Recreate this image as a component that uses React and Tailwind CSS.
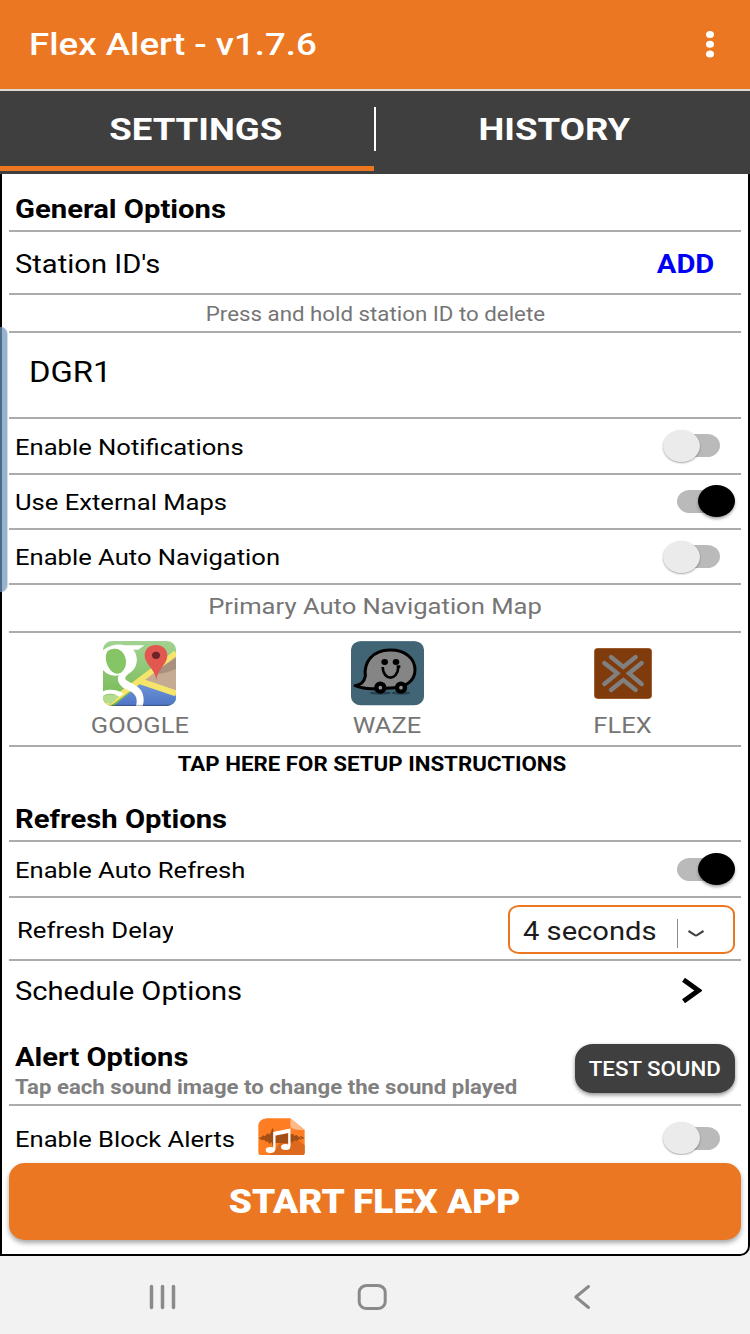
import { clsx } from 'clsx'

// Labels are drawn in a slightly extended Roboto
function Label({ className, children }) {
  return (
    <span className={clsx('inline-block whitespace-nowrap leading-none scale-x-[1.143]', className)}>
      {children}
    </span>
  )
}

function Row({ className, children }) {
  return (
    <div className={clsx('flex items-center shrink-0 border-b-2 border-[#ababab]', className)}>
      {children}
    </div>
  )
}

function Toggle({ on }) {
  return (
    <div className="relative w-[72px] h-8 mr-[6px] flex items-center">
      <div className="w-[43px] h-[23px] ml-[14px] rounded-[13px/11.5px] bg-[#bababa]" />
      <div
        className={clsx(
          'absolute top-0 w-[37px] h-8 rounded-[50%]',
          on
            ? 'right-0 bg-black shadow-[0_2px_3px_rgba(0,0,0,0.35)]'
            : 'left-0 bg-[#ebebeb] shadow-[0_1px_2px_rgba(0,0,0,0.35)]'
        )}
      />
    </div>
  )
}

function SwitchRow({ label, on, className }) {
  return (
    <Row className={clsx('justify-between', className)}>
      <Label className="text-[22.4px] origin-left ml-[6px] mt-[2px]">{label}</Label>
      <Toggle on={on} />
    </Row>
  )
}

function GoogleIcon() {
  return (
    <svg className="w-[73px] h-[65px]" viewBox="0 0 219 195" preserveAspectRatio="none">
      <defs>
        <clipPath id="gmap">
          <rect x="0" y="0" width="219" height="195" rx="28" ry="25" />
        </clipPath>
        <linearGradient id="sea" x1="0" y1="0" x2="0" y2="1">
          <stop offset="0" stopColor="#6f93d8" />
          <stop offset="1" stopColor="#4d75c4" />
        </linearGradient>
        <linearGradient id="land" x1="0" y1="0" x2="0" y2="1">
          <stop offset="0" stopColor="#a3d292" />
          <stop offset="1" stopColor="#72b94f" />
        </linearGradient>
      </defs>
      <g clipPath="url(#gmap)">
        <rect width="219" height="195" fill="url(#land)" />
        <path d="M219 44 L108 124 L219 168Z" fill="#c5ab93" />
        <path d="M219 50 C196 66 172 78 150 92 C160 102 180 100 219 84Z" fill="#a8927f" />
        <path d="M32 195 L112 130 L219 163 V195Z" fill="url(#sea)" />
        <path d="M219 36 L8 195" stroke="#f5e56b" strokeWidth="17" />
        <path d="M104 118 L219 157" stroke="#f5e56b" strokeWidth="18" />
        <path d="M0 165 Q28 156 48 166 L24 190 L0 180Z" fill="#b4dc8e" />
        <path d="M0 28 C24 10 48 8 66 13 H124 L106 26 H91 C108 48 104 78 84 93 C70 103 62 110 70 118 C82 127 112 135 119 158 C124 176 122 185 119 195 H99 C106 170 96 156 74 147 C50 139 38 117 48 103 C26 107 10 98 0 87Z" fill="#fff" />
        <path d="M29 24 C8 25 4 48 13 72 C22 94 42 106 57 92 C74 77 71 52 62 39 C54 26 43 22 29 24Z" fill="#86c566" />
        <path d="M0 151 C22 142 45 147 62 158 L49 167 C30 155 14 157 0 165Z" fill="#fff" />
        <path d="M160 118 C158 86 125 69 125 44 C125 24 140 12 159 12 C179 12 193 25 193 44 C193 70 162 86 160 118Z" fill="#e25850" />
        <ellipse cx="159" cy="43" rx="12" ry="11" fill="#6c2426" />
        <path d="M0 193 H219" stroke="#000" strokeOpacity=".25" strokeWidth="4" />
      </g>
    </svg>
  )
}

function WazeIcon() {
  return (
    <svg className="w-[73px] h-[65px]" viewBox="0 0 219 195" preserveAspectRatio="none">
      <rect width="219" height="193" rx="30" ry="26" fill="#426575" />
      <path d="M30 1 H190" stroke="#5d7f8d" strokeWidth="3" />
      <ellipse cx="88" cy="156" rx="32" ry="5" fill="#27434f" />
      <ellipse cx="150" cy="156" rx="28" ry="5" fill="#27434f" />
      <path d="M12 134 C31 132 40 122 43 105 C38 62 65 28 116 27 C163 26 192 53 192 87 C192 119 164 139 130 140 C89 143 45 148 12 134Z" fill="#858585" stroke="#000" strokeWidth="9" strokeLinejoin="round" />
      <ellipse cx="101" cy="63" rx="10" ry="9" />
      <ellipse cx="135" cy="63" rx="10" ry="9" />
      <path d="M95 78 C96 120 140 121 142 78 M137 77 H148" fill="none" stroke="#000" strokeWidth="8" />
      <ellipse cx="88" cy="140" rx="12" ry="12" fill="#929292" stroke="#000" strokeWidth="13" />
      <ellipse cx="150" cy="140" rx="12" ry="12" fill="#929292" stroke="#000" strokeWidth="13" />
    </svg>
  )
}

function FlexIcon() {
  return (
    <svg className="w-[58px] h-[51px]" viewBox="0 0 174 153" preserveAspectRatio="none">
      <rect x="1" y="1" width="172" height="151" rx="12" ry="10" fill="#803b0d" stroke="#9a4c12" strokeWidth="2" />
      <g fill="none" stroke="#808080" strokeWidth="13" strokeLinecap="round">
        <path d="M51 27 L88 57 L125 27" />
        <path d="M51 126 L88 96 L125 126" />
        <path d="M31 45 L70 76 L31 108" />
        <path d="M143 45 L105 76 L143 108" />
      </g>
    </svg>
  )
}

function SoundIcon() {
  return (
    <svg className="w-[47px] h-[38px]" viewBox="0 0 141 114" preserveAspectRatio="none">
      <path d="M26 1 H97 L140 36 V104 Q140 112 131 112 H10 Q1 112 1 103 V23 Q3 3 26 1Z" fill="#ff7d22" />
      <path d="M93 45 L140 82 V104 Q140 112 131 112 H34Z" fill="#dc691d" />
      <path d="M2 60 L10 57 L16 52 L20 55 L25 50 L30 45 L34 50 L39 42 L44 28 L48 46 L52 44 H94 L99 50 L104 47 L109 54 L116 50 L121 56 L129 54 L139 60 L130 65 L122 64 L116 70 L109 66 L104 74 L99 70 L94 75 H50 L45 86 L40 72 L34 78 L29 70 L24 72 L19 65 L12 67Z" fill="#a34f16" />
      <path d="M97 1 L140 36 L132 36 Q97 36 97 24Z" fill="#ffb888" />
      <path d="M97 30 L137 68" stroke="#ff9145" strokeWidth="2" />
      <path d="M49 96 V45 L94 36 V85" fill="none" stroke="#fff" strokeWidth="7" />
      <path d="M49 48 L94 39" stroke="#fff" strokeWidth="11" />
      <ellipse cx="37" cy="96" rx="14" ry="9" fill="#fff" />
      <ellipse cx="83" cy="87" rx="14" ry="9" fill="#fff" />
    </svg>
  )
}

function MapChoice({ name, className, children }) {
  return (
    <div className={clsx('flex flex-col items-center', className)}>
      <div className="h-[65px] mt-2 flex items-center">{children}</div>
      <Label className="text-[22.3px] text-[#757575] mt-2">{name}</Label>
    </div>
  )
}

export default function App() {
  return (
    <div
      className="relative w-[750px] h-[1334px] overflow-hidden flex flex-col bg-[#f2f2f2] text-black font-[Roboto,'Liberation_Sans',sans-serif]"
    >
      {/* App bar */}
      <header className="h-[89px] shrink-0 bg-[#eb7722] flex items-center justify-between text-white">
        <Label className="text-[32.1px] font-medium origin-left ml-[29px]">Flex Alert - v1.7.6</Label>
        <svg className="w-2 h-[27px] mr-9" viewBox="0 0 8 27">
          <ellipse cx="4" cy="3.5" rx="4" ry="3.5" fill="#fff" />
          <ellipse cx="4" cy="13.3" rx="4" ry="3.5" fill="#fff" />
          <ellipse cx="4" cy="23" rx="4" ry="3.5" fill="#fff" />
        </svg>
      </header>

      {/* Tabs */}
      <nav className="h-[85px] shrink-0 border-t-2 border-[#dcd8d2] bg-[#3f3f3f] flex text-white">
        <div className="w-[374px] border-b-[5px] border-[#eb7722] h-20 flex items-center justify-center">
          <Label className="text-[32px] font-bold ml-[18px] mt-px">SETTINGS</Label>
        </div>
        <div className="w-[2px] h-11 mt-4 bg-white" />
        <div className="flex-1 h-[75px] flex items-center justify-center">
          <Label className="text-[32px] font-bold mr-[18px] mt-px">HISTORY</Label>
        </div>
      </nav>

      {/* Settings */}
      <main className="h-[1082px] shrink-0 bg-white border-2 border-t-0 border-black rounded-br-[10px] px-[7px] flex flex-col">
        <Row className="h-[58px]">
          <Label className="text-[25.6px] font-bold origin-left ml-[6px] mt-4">General Options</Label>
        </Row>
        <Row className="h-[63px] justify-between">
          <Label className="text-[25.5px] origin-left ml-[6px] mt-[5px]">Station ID's</Label>
          <Label className="text-[25.5px] font-bold text-[#0000f5] origin-right mr-[27px] mt-[5px]">ADD</Label>
        </Row>
        <Row className="h-[38px] justify-center">
          <Label className="text-[19.5px] text-[#757575] mt-[4px]">Press and hold station ID to delete</Label>
        </Row>
        <Row className="h-[86px]">
          <Label className="text-[28.7px] origin-left ml-[20px] mb-[6px]">DGR1</Label>
        </Row>
        <SwitchRow className="h-[55.5px]" label="Enable Notifications" />
        <SwitchRow className="h-[55.5px]" label="Use External Maps" on />
        <SwitchRow className="h-[55px]" label="Enable Auto Navigation" />
        <Row className="h-12 justify-center">
          <Label className="text-[22.4px] text-[#757575] mb-[3px]">Primary Auto Navigation Map</Label>
        </Row>
        <Row className="h-[114px] !items-start">
          <MapChoice className="w-[261px]" name="GOOGLE"><GoogleIcon /></MapChoice>
          <MapChoice className="w-[234px]" name="WAZE"><WazeIcon /></MapChoice>
          <MapChoice className="w-[237px]" name="FLEX"><FlexIcon /></MapChoice>
        </Row>

        <div className="h-[38px] shrink-0 flex justify-center">
          <Label className="text-[19.5px] font-bold mt-2 mr-[6px]">TAP HERE FOR SETUP INSTRUCTIONS</Label>
        </div>
        <Row className="h-[57px]">
          <Label className="text-[25.6px] font-bold origin-left ml-[6px] mt-[14px]">Refresh Options</Label>
        </Row>
        <SwitchRow className="h-[56px]" label="Enable Auto Refresh" on />
        <Row className="h-[63px] justify-between">
          <div className="w-[156px] ml-[8px] mt-[4px] overflow-hidden">
            <Label className="text-[22.5px] origin-left py-1 align-top">Refresh Delay</Label>
          </div>
          <div className="w-[227px] h-[49px] mr-[6px] mt-[2px] border-2 border-[#eb7722] rounded-[11px/9px] flex items-center">
            <Label className="text-[25.5px] text-[#1c1c1c] origin-left ml-[13px] mt-[5px]">4 seconds</Label>
            <div className="w-px h-[29px] ml-auto bg-[#8c8c8c] mt-[7px]" />
            <svg className="w-4 h-[7px] ml-[10px] mr-[29px] mt-[7px]" viewBox="0 0 16 7">
              <path d="M.5 1 L6.5 4.9 Q8 5.7 9.5 4.9 L15.5 1" fill="none" stroke="#444" strokeWidth="2.2" />
            </svg>
          </div>
        </Row>
        <div className="h-[60px] shrink-0 flex items-center justify-between">
          <Label className="text-[25.5px] origin-left ml-[6px] mt-[2px]">Schedule Options</Label>
          <svg className="w-5 h-[25px] mr-[39px] mb-[2px]" viewBox="0 0 20 25">
            <path d="M1.5 1.8 L16.5 12.5 L1.5 23.2" fill="none" stroke="#000" strokeWidth="5" />
          </svg>
        </div>

        <Row className="h-[85px] justify-between !items-start">
          <div className="flex flex-col ml-[6px] mt-6">
            <Label className="text-[25.5px] font-bold origin-left">Alert Options</Label>
            <Label className="text-[19.4px] font-bold text-[#808080] origin-left mt-[7px]">
              Tap each sound image to change the sound played
            </Label>
          </div>
          <button className="w-[160px] h-[49px] mr-[6px] mt-[23px] bg-[#3f3f3f] text-white rounded-[18px/16px] flex items-center justify-center shadow-[0_2px_4px_rgba(0,0,0,0.45)]">
            <Label className="text-[19.5px] font-medium mt-[3px]">TEST SOUND</Label>
          </button>
        </Row>
        <div className="h-[49px] shrink-0 overflow-hidden flex items-start pt-3">
          <Label className="text-[22.4px] origin-left ml-[6px] mt-[10px]">Enable Block Alerts</Label>
          <div className="ml-auto flex">
            <div className="mr-[358px]"><SoundIcon /></div>
            <div className="mt-[4px]"><Toggle /></div>
          </div>
        </div>

        <button className="w-[732px] h-[77px] mt-2 shrink-0 bg-[#eb7722] text-white rounded-[16px/15px] flex items-center justify-center shadow-[0_3px_5px_rgba(0,0,0,0.35)]">
          <Label className="text-[32.4px] font-black mt-[2px]">START FLEX APP</Label>
        </button>
      </main>

      {/* Edge panel handle */}
      <div className="absolute left-0 top-[327px] w-2 h-[265px] rounded-r-[7px] bg-[#6c96bb]/72 border-r border-[#d5dbe0]" />

      {/* System navigation */}
      <footer className="flex-1 bg-[#f2f2f2]">
        <svg className="w-[750px] h-[78px]" viewBox="0 1256 750 78" fill="none" stroke="#8a8a8a" strokeLinecap="round" strokeLinejoin="round">
          <path d="M151.5 1286.5V1307.5M162.5 1286.5V1307.5M173.5 1286.5V1307.5" strokeWidth="3.5" />
          <rect x="359.2" y="1285.6" width="26" height="23" rx="7.5" ry="6.5" strokeWidth="3" />
          <path d="M588.5 1286.5 L575.8 1297 L588.5 1307.5" strokeWidth="3" />
        </svg>
      </footer>
    </div>
  )
}
